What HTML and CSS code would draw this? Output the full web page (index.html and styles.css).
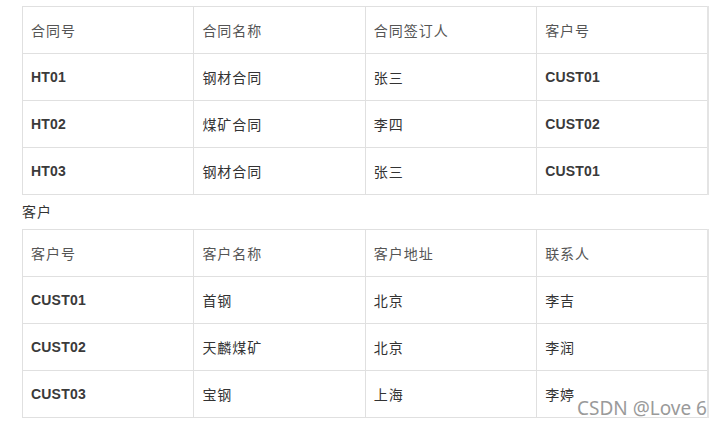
FILE: index.html
```html
<!DOCTYPE html>
<html lang="zh">
<head>
<meta charset="utf-8">
<title>表</title>
<link rel="stylesheet" href="styles.css">
</head>
<body>
<div class="page">
  <table class="grid">
    <thead>
      <tr><th>合同号</th><th>合同名称</th><th>合同签订人</th><th>客户号</th></tr>
    </thead>
    <tbody>
      <tr><td class="id">HT01</td><td>钢材合同</td><td>张三</td><td class="id">CUST01</td></tr>
      <tr><td class="id">HT02</td><td>煤矿合同</td><td>李四</td><td class="id">CUST02</td></tr>
      <tr><td class="id">HT03</td><td>钢材合同</td><td>张三</td><td class="id">CUST01</td></tr>
    </tbody>
  </table>
  <p class="label">客户</p>
  <table class="grid">
    <thead>
      <tr><th>客户号</th><th>客户名称</th><th>客户地址</th><th>联系人</th></tr>
    </thead>
    <tbody>
      <tr><td class="id">CUST01</td><td>首钢</td><td>北京</td><td>李吉</td></tr>
      <tr><td class="id">CUST02</td><td>天麟煤矿</td><td>北京</td><td>李润</td></tr>
      <tr><td class="id">CUST03</td><td>宝钢</td><td>上海</td><td>李婷</td></tr>
    </tbody>
  </table>
  <div class="watermark">CSDN @Love 6</div>
</div>
</body>
</html>
```
FILE: styles.css
```css
html, body {
  margin: 0;
  padding: 0;
  background: #fff;
}
.page {
  position: relative;
  width: 722px;
  height: 425px;
  box-sizing: border-box;
  padding: 6px 0 0 22px;
  font-family: "Liberation Sans", Arial, "Noto Sans CJK SC", sans-serif;
  font-size: 14px;
  color: #333;
}
.grid {
  width: 687px;
  border-collapse: collapse;
  table-layout: fixed;
  border-right: 2px solid #e4e4e4;
}
.grid th, .grid td {
  border: 1px solid #e0e0e0;
  height: 47px;
  padding: 0 8px;
  text-align: left;
  vertical-align: middle;
  letter-spacing: 1px;
  box-sizing: border-box;
}
.grid th {
  font-weight: normal;
  color: #555;
}
.grid td {
  font-weight: normal;
  color: #333;
}
.grid td.id {
  font-weight: bold;
  letter-spacing: 0.2px;
  color: #3a3a3a;
}
.label {
  margin: 0;
  height: 34px;
  line-height: 34px;
  letter-spacing: 1px;
  color: #333;
}
.watermark {
  position: absolute;
  right: 15px;
  bottom: 4px;
  font-family: "Noto Sans", "Open Sans", sans-serif;
  font-size: 19px;
  color: #9a9a9a;
  text-shadow: 0 0 2px #fff, 0 0 2px #fff;
}
```
